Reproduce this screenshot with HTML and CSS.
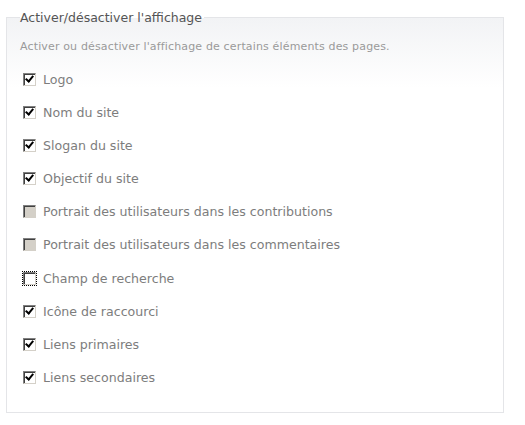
FILE: index.html
```html
<!DOCTYPE html>
<html lang="fr">
<head>
<meta charset="utf-8">
<link rel="stylesheet" href="styles.css">
</head>
<body>
<fieldset class="panel">
  <legend class="panel-title">Activer/désactiver l'affichage</legend>
  <p class="desc">Activer ou désactiver l'affichage de certains éléments des pages.</p>
  <ul class="options">
    <li class="option"><span class="box checked"></span><span class="label">Logo</span></li>
    <li class="option"><span class="box checked"></span><span class="label">Nom du site</span></li>
    <li class="option"><span class="box checked"></span><span class="label">Slogan du site</span></li>
    <li class="option"><span class="box checked"></span><span class="label">Objectif du site</span></li>
    <li class="option"><span class="box disabled"></span><span class="label">Portrait des utilisateurs dans les contributions</span></li>
    <li class="option"><span class="box disabled"></span><span class="label">Portrait des utilisateurs dans les commentaires</span></li>
    <li class="option"><span class="focus"><span class="box"></span></span><span class="label">Champ de recherche</span></li>
    <li class="option"><span class="box checked"></span><span class="label">Icône de raccourci</span></li>
    <li class="option"><span class="box checked"></span><span class="label">Liens primaires</span></li>
    <li class="option"><span class="box checked"></span><span class="label">Liens secondaires</span></li>
  </ul>
</fieldset>
</body>
</html>
```

FILE: styles.css
```css
html, body {
  margin: 0;
  padding: 0;
  background: #ffffff;
}
body {
  padding: 10px 21px 0 6px;
  font-family: "DejaVu Sans", Verdana, sans-serif;
}
.panel {
  margin: 0;
  padding: 0 16px 22px 16px;
  border: 1px solid #e4e5e8;
  background: linear-gradient(#f2f3f5 0px, #ffffff 70px);
  box-sizing: border-box;
  height: 403px;
}
.panel-title {
  padding: 0 2px 0 0;
  margin-left: -3px;
  font-size: 12.5px;
  color: #555555;
}
.desc {
  margin: 15px 0 0 -3px;
  font-size: 11px;
  color: #9a9a9a;
  letter-spacing: 0.15px;
}
.options {
  list-style: none;
  margin: 19px 0 0 0;
  padding: 0;
  display: flex;
  flex-direction: column;
  gap: 19.2px;
}
.option {
  display: flex;
  align-items: center;
  height: 14px;
  gap: 7px;
}
.label {
  font-size: 12.6px;
  color: #7d7d7d;
}
.box {
  display: block;
  width: 13px;
  height: 13px;
  box-sizing: border-box;
  border: 1px solid;
  border-color: #808080 #d4d0c8 #d4d0c8 #808080;
  background: #ffffff;
  box-shadow: inset 1px 1px 0 #404040;
  position: relative;
}
.box.checked::after {
  content: "";
  position: absolute;
  left: 3px;
  top: 0px;
  width: 3px;
  height: 6px;
  border: solid #000000;
  border-width: 0 2px 2px 0;
  transform: rotate(40deg);
  transform-origin: center;
}
.box.disabled {
  background: #d4d0c8;
}
.focus {
  display: block;
  outline: 1px dotted #000000;
  outline-offset: 0;
}
```
